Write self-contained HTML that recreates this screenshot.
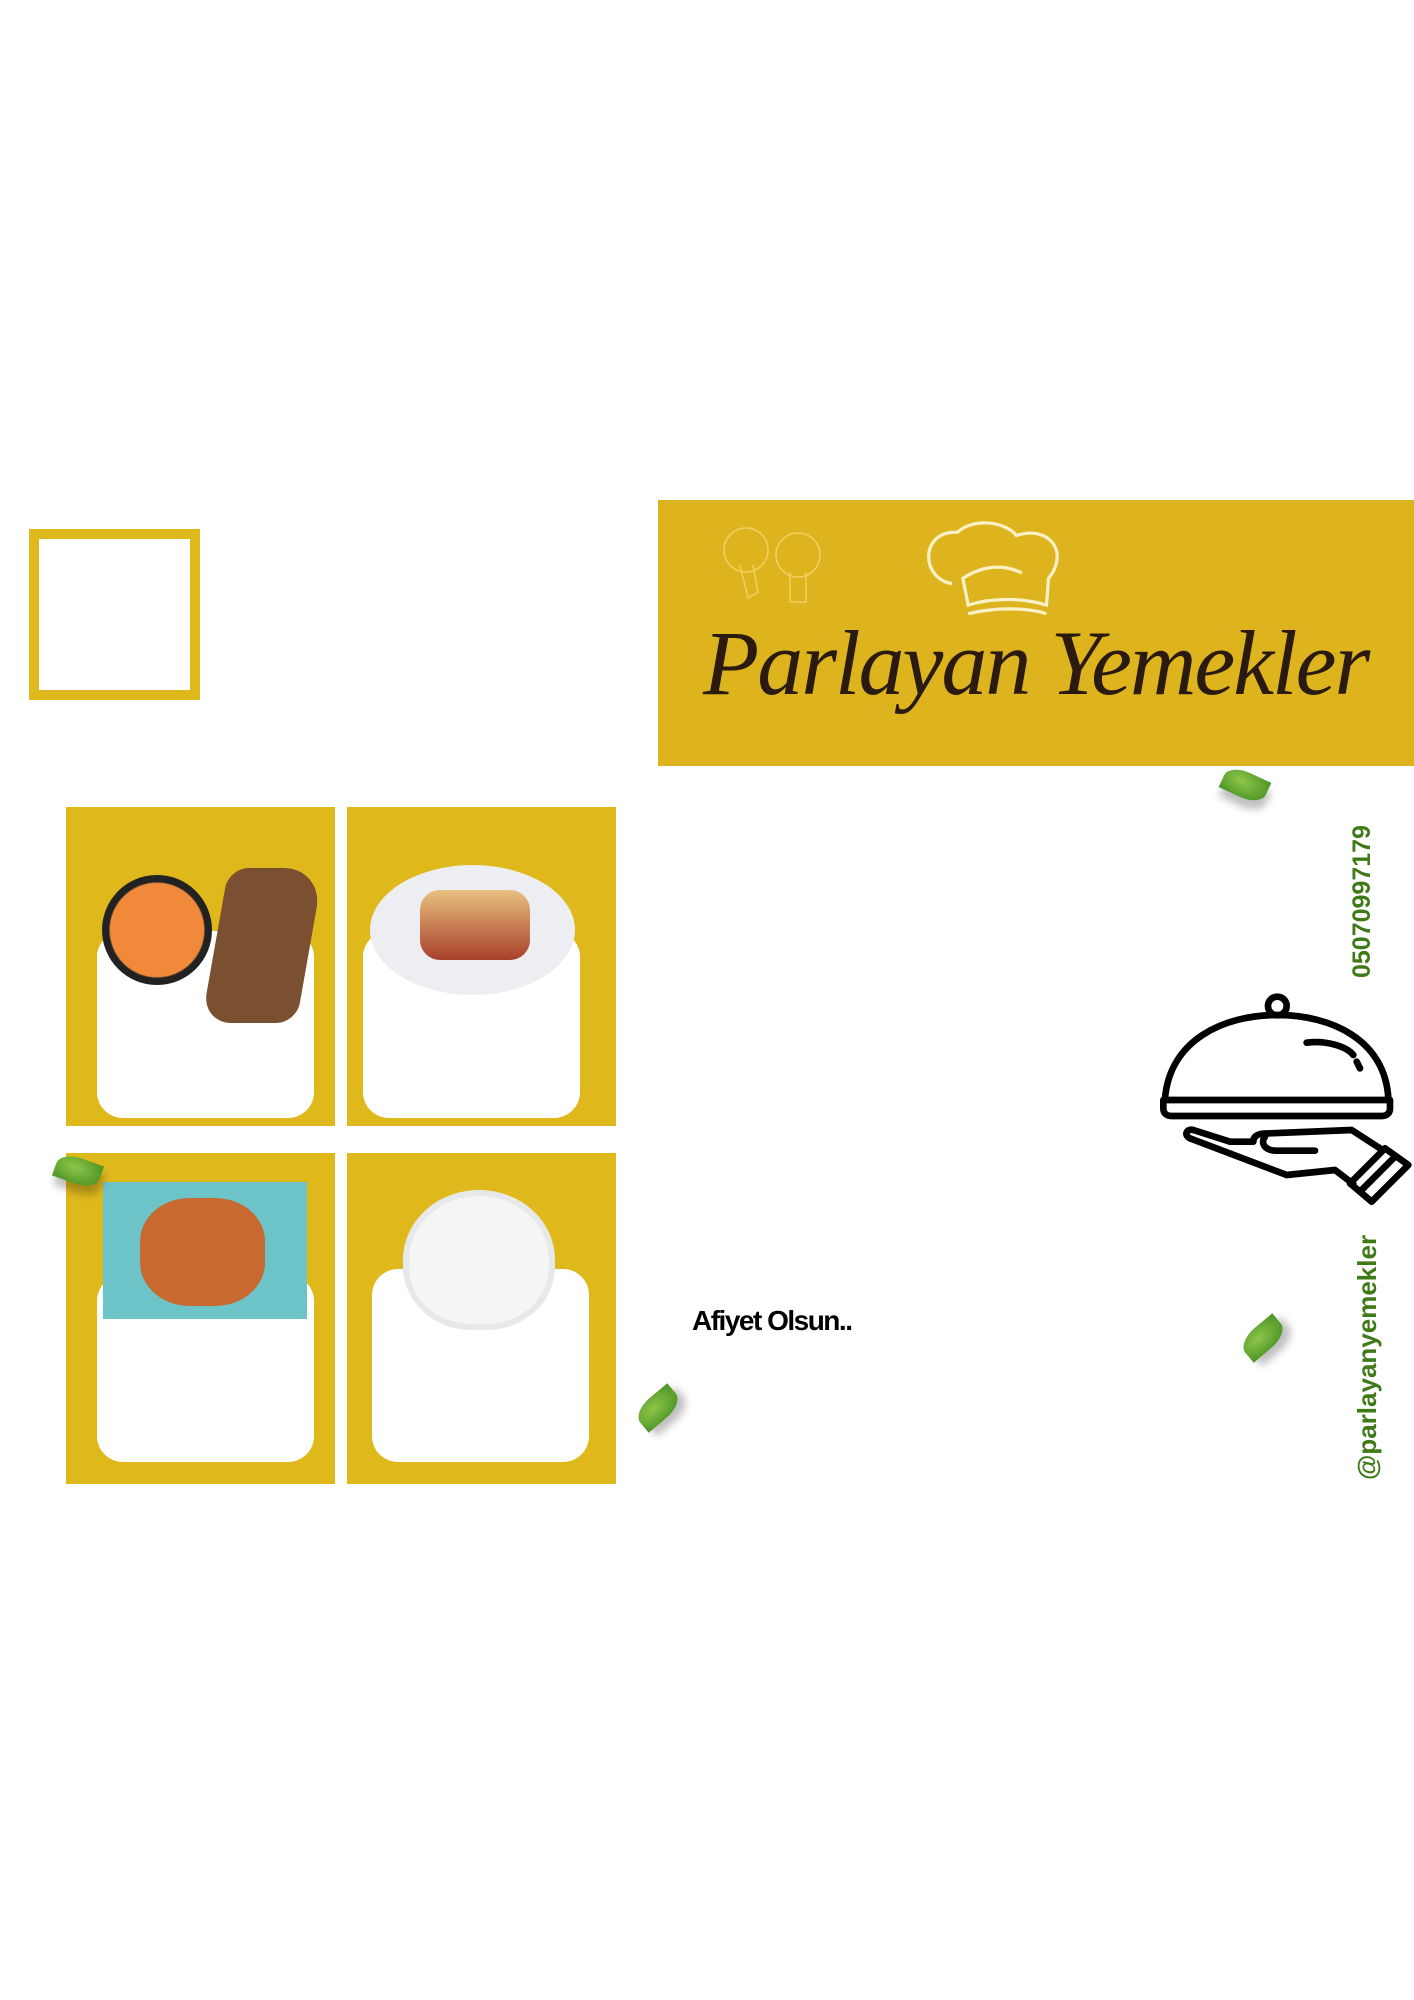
<!DOCTYPE html>
<html><head><meta charset="utf-8"><style>
body{margin:0;width:1414px;height:2000px;background:#fff;position:relative;overflow:hidden;font-family:"Liberation Sans",sans-serif}
.a{position:absolute}
.card{position:absolute;background:#dfb81c}
.in{position:absolute;background:#fff;border-radius:26px}
.leaf{position:absolute;width:46px;height:26px;background:radial-gradient(ellipse at 40% 40%,#8fc64a,#3e8a1e);border-radius:50% 0 50% 0;box-shadow:4px 8px 8px rgba(0,0,0,.25)}
</style></head><body>
<div class="a" style="left:29px;top:529px;width:151px;height:151px;border:10px solid #dfb81c"></div>

<div class="a" style="left:658px;top:500px;width:756px;height:266px;background:#ddb41e;overflow:hidden">
 <svg class="a" style="left:262px;top:18px" width="150" height="110" viewBox="0 0 140 100" fill="none" stroke="#fbf1c8" stroke-width="3"><path d="M30 60 C0 55 0 10 35 12 C50 -2 80 2 90 15 C120 5 140 30 120 55 L118 80 C100 74 70 72 45 80 L40 55 C55 45 75 40 95 50"/><path d="M45 88 C70 82 100 82 118 88"/></svg>
 <svg class="a" style="left:60px;top:20px" width="120" height="90" fill="none" stroke="#f0d060" stroke-width="1.5"><circle cx="28" cy="30" r="22"/><path d="M22 45 L30 78 L40 72 L35 45"/><circle cx="80" cy="35" r="22"/><path d="M72 52 L72 82 L88 82 L88 52"/></svg>
 <div class="a" style="left:45px;top:110px;font:italic 92px 'Liberation Serif',serif;color:#2a1a10;letter-spacing:-2px;white-space:nowrap">Parlayan Yemekler</div>
</div>

<div class="card" style="left:66px;top:807px;width:269px;height:319px"><div class="in" style="left:31px;top:124px;width:217px;height:187px"></div></div>
<div class="card" style="left:347px;top:807px;width:269px;height:319px"><div class="in" style="left:16px;top:124px;width:217px;height:187px"></div></div>
<div class="card" style="left:66px;top:1153px;width:269px;height:331px"><div class="in" style="left:31px;top:122px;width:217px;height:187px"></div></div>
<div class="card" style="left:347px;top:1153px;width:269px;height:331px"><div class="in" style="left:25px;top:116px;width:217px;height:193px"></div></div>

<div class="a" style="left:102px;top:875px;width:110px;height:110px;border-radius:50%;background:radial-gradient(#f08a3a 60%,#222 62%)"></div>
<div class="a" style="left:215px;top:868px;width:95px;height:155px;background:#7a5030;border-radius:20px 40px 20px 30px;transform:skewX(-10deg)"></div>
<div class="a" style="left:370px;top:865px;width:205px;height:130px;border-radius:50%;background:#eceef2"></div>
<div class="a" style="left:420px;top:890px;width:110px;height:70px;border-radius:20px;background:linear-gradient(#e8c080,#a8402a)"></div>
<div class="a" style="left:103px;top:1182px;width:204px;height:137px;background:#6cc4c8"></div>
<div class="a" style="left:140px;top:1198px;width:125px;height:108px;border-radius:40%;background:#c86a30"></div>
<div class="a" style="left:403px;top:1190px;width:152px;height:140px;border-radius:50% 50% 45% 45%;background:#f4f6f4;box-shadow:inset 0 0 0 6px #e6e8ea"></div>

<div class="a" style="left:692px;top:1305px;font-weight:bold;font-size:28px;letter-spacing:-1.5px;color:#000">Afiyet Olsun..</div>

<div class="a" style="left:1348px;top:978px;transform:rotate(-90deg);transform-origin:0 0;font-weight:bold;font-size:25px;color:#3f7a18;white-space:nowrap">05070997179</div>
<div class="a" style="left:1352px;top:1480px;transform:rotate(-90deg);transform-origin:0 0;font-weight:bold;font-size:26px;color:#3f7a18;white-space:nowrap">@parlayanyemekler</div>

<svg class="a" style="left:1150px;top:980px" width="264" height="240" viewBox="0 0 792 720" fill="none" stroke="#000" stroke-width="20" stroke-linejoin="round" stroke-linecap="round">
<circle cx="382" cy="78" r="28"/>
<path d="M45 355 C60 180 220 105 382 105 C545 105 705 180 715 355"/>
<path d="M40 360 L720 360 L720 385 C720 400 710 408 695 408 L65 408 C50 408 40 400 40 385 Z"/>
<path d="M470 188 C530 180 590 200 610 225"/><path d="M620 245 L630 265"/>
<path d="M240 485 L130 450 C110 445 100 465 120 475 L410 585 L555 570 L610 612"/>
<path d="M310 485 C310 460 340 460 360 460 L605 450 L690 505"/>
<path d="M345 470 C330 490 345 512 380 512 L495 512"/>
<path d="M240 485 L305 485"/>
<path d="M600 610 L705 505 L775 555 L665 665 Z"/><path d="M630 635 L735 530"/>
</svg>

<div class="leaf" style="left:1222px;top:772px;transform:rotate(25deg)"></div>
<div class="leaf" style="left:55px;top:1158px;transform:rotate(20deg)"></div>
<div class="leaf" style="left:635px;top:1395px;transform:rotate(-40deg)"></div>
<div class="leaf" style="left:1240px;top:1325px;transform:rotate(-40deg)"></div>
</body></html>
